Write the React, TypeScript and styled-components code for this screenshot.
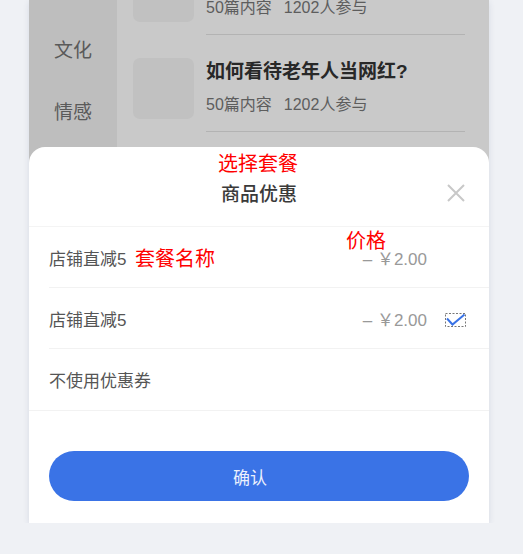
import React from 'react';
import styled, { createGlobalStyle } from 'styled-components';

const GlobalStyle = createGlobalStyle`
    body {
        margin: 0;
        background: #eff1f5;
        font-family: 'Liberation Sans', 'Noto Sans CJK SC', sans-serif;
    }
`;

const Stage = styled.div`
    padding-left: 29px;
`;

const Phone = styled.div`
    position: relative;
    width: 460px;
    height: 523px;
    overflow: hidden;
    background: #fff;
    box-shadow: 0 2px 6px rgba(40, 60, 110, 0.12);
`;

const Page = styled.div`
    display: flex;
    height: 100%;
`;

const Sidebar = styled.div`
    width: 88px;
    flex-shrink: 0;
    padding-top: 17px;
    background: #f2f2f2;
`;

const SideItem = styled.div`
    height: 62px;
    display: flex;
    align-items: center;
    justify-content: center;
    font-size: 19px;
    color: #737373;
`;

const List = styled.div`
    flex: 1;
    padding-left: 16px;
    margin-top: -62px;
`;

const Item = styled.div`
    display: flex;
    gap: 12px;
`;

const Thumb = styled.div`
    width: 61px;
    height: 61px;
    margin-top: 23px;
    flex-shrink: 0;
    border-radius: 7px;
    background: #f5f5f5;
`;

const ItemBody = styled.div`
    flex: 1;
    height: 97px;
    box-sizing: border-box;
    margin-right: 24px;
    padding-top: 24px;
    border-bottom: 1px solid #e3e3e3;
`;

const ItemTitle = styled.div`
    font-size: 19px;
    line-height: 26px;
    font-weight: 700;
    color: #333;
`;

const ItemMeta = styled.div`
    display: flex;
    gap: 12px;
    margin-top: 9px;
    font-size: 16px;
    line-height: 22px;
    color: #777;
`;

const Mask = styled.div`
    position: absolute;
    inset: 0;
    background: rgba(0, 0, 0, 0.21);
`;

const Sheet = styled.div`
    position: absolute;
    left: 0;
    right: 0;
    top: 147px;
    bottom: 0;
    display: flex;
    flex-direction: column;
    background: #fff;
    border-radius: 16px 16px 0 0;
`;

const Header = styled.div`
    height: 80px;
    box-sizing: border-box;
    padding-top: 12px;
    display: grid;
    grid-template-columns: 1fr auto 1fr;
    align-items: center;
    border-bottom: 1px solid #f4f4f4;
`;

const Title = styled.div`
    grid-column: 2;
    font-size: 19px;
    font-weight: 500;
    color: #3a3a3a;
`;

const Close = styled.button`
    justify-self: end;
    margin-right: 23px;
    padding: 0;
    border: 0;
    background: none;
    display: flex;
    cursor: pointer;
`;

const Row = styled.div<{ $last?: boolean }>`
    height: 61px;
    box-sizing: border-box;
    margin-left: 20px;
    padding-right: 23px;
    display: flex;
    align-items: center;
    font-size: 17px;
    color: #555;
    border-bottom: ${(p) => (p.$last ? '0' : '1px solid #f2f2f2')};
`;

const Price = styled.span`
    margin-left: auto;
    color: #999;
`;

const CheckSlot = styled.span`
    width: 21px;
    height: 14px;
    margin: 3px 0 0 18px;
    display: flex;
`;

const Footer = styled.div`
    padding: 40px 20px 22px;
    border-top: 1px solid #f2f2f2;
`;

const ConfirmButton = styled.button`
    width: 100%;
    height: 50px;
    padding: 0 18px 0 0;
    border: 0;
    border-radius: 25px;
    background: #3a73e6;
    color: #eaf0fd;
    font-family: inherit;
    font-size: 17px;
    cursor: pointer;
`;

const Note = styled.span<{ $x: number; $y: number }>`
    position: absolute;
    left: ${(p) => p.$x}px;
    top: ${(p) => p.$y}px;
    font-family: 'Noto Sans CJK SC', sans-serif;
    font-size: 20px;
    line-height: 26px;
    color: #ff0000;
`;

const topics = [
    { title: '如何看待老年人当网红?' },
    { title: '如何看待老年人当网红?' },
];

const offers = [
    { name: '店铺直减5', price: '– ￥2.00', checked: false },
    { name: '店铺直减5', price: '– ￥2.00', checked: true },
    { name: '不使用优惠券', price: '', checked: false },
];

const CheckIcon = () => (
    <svg width="21" height="14" viewBox="0 0 21 14">
        <rect x="0.5" y="0.5" width="20" height="13" fill="none" stroke="#777" strokeDasharray="2 1.5" />
        <polyline points="2,5.5 7.5,11.5 19.5,1.5" fill="none" stroke="#3a73e6" strokeWidth="2" />
    </svg>
);

export default function App() {
    return (
        <>
            <GlobalStyle />
            <Stage>
                <Phone>
                    <Page>
                        <Sidebar>
                            <SideItem>文化</SideItem>
                            <SideItem>情感</SideItem>
                        </Sidebar>
                        <List>
                            {topics.map((t, i) => (
                                <Item key={i}>
                                    <Thumb />
                                    <ItemBody>
                                        <ItemTitle>{t.title}</ItemTitle>
                                        <ItemMeta>
                                            <span>50篇内容</span>
                                            <span>1202人参与</span>
                                        </ItemMeta>
                                    </ItemBody>
                                </Item>
                            ))}
                        </List>
                    </Page>
                    <Mask />
                    <Sheet>
                        <Header>
                            <Title>商品优惠</Title>
                            <Close aria-label="关闭">
                                <svg width="20" height="20" viewBox="0 0 20 20">
                                    <path d="M2 2 L18 18 M18 2 L2 18" stroke="#c8c8c8" strokeWidth="2" />
                                </svg>
                            </Close>
                        </Header>
                        {offers.map((o, i) => (
                            <Row key={i} $last={i === offers.length - 1}>
                                <span>{o.name}</span>
                                <Price>{o.price}</Price>
                                <CheckSlot>{o.checked && <CheckIcon />}</CheckSlot>
                            </Row>
                        ))}
                        <Footer>
                            <ConfirmButton>确认</ConfirmButton>
                        </Footer>
                        <Note $x={189} $y={3}>选择套餐</Note>
                        <Note $x={106} $y={98}>套餐名称</Note>
                        <Note $x={317} $y={80}>价格</Note>
                    </Sheet>
                </Phone>
            </Stage>
        </>
    );
}
